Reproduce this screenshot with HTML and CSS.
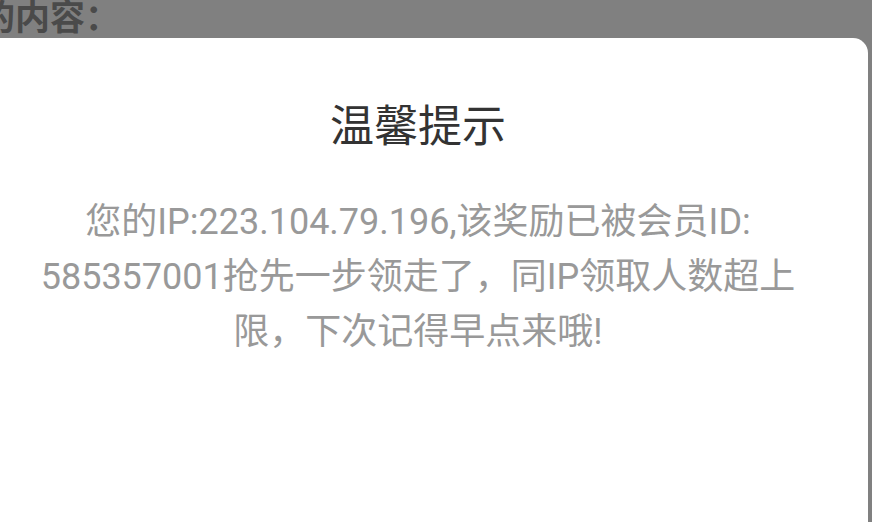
FILE: index.html
```html
<!DOCTYPE html>
<html lang="zh-CN">
<head>
<meta charset="utf-8">
<link rel="stylesheet" href="styles.css">
</head>
<body>
<div class="page">
  <div class="header-text">的内容：</div>
  <div class="modal">
    <div class="title">温馨提示</div>
    <div class="message">您的IP:223.104.79.196,该奖励已被会员ID:<wbr>585357001抢先一步领走了，同IP领取人数超上限，下次记得早点来哦!</div>
  </div>
</div>
</body>
</html>
```
FILE: styles.css
```css
html, body {
  margin: 0;
  padding: 0;
  width: 872px;
  height: 522px;
  overflow: hidden;
  background: #808080;
}
.page {
  font-family: Roboto, "Noto Sans CJK SC", sans-serif;
}
.header-text {
  height: 38px;
  line-height: 38px;
  font-size: 35px;
  font-weight: bold;
  color: #4a4a4a;
  text-indent: -20px;
  white-space: nowrap;
  overflow: hidden;
}
.modal {
  margin-left: -32px;
  width: 900px;
  height: 500px;
  box-sizing: border-box;
  background: #fff;
  border-radius: 15px;
  padding: 67px 67px 0;
}
.title {
  font-size: 44px;
  line-height: 44px;
  color: #333;
  text-align: center;
}
.message {
  margin-top: 46px;
  font-size: 36px;
  line-height: 55px;
  color: #999;
  text-align: center;
}
```
